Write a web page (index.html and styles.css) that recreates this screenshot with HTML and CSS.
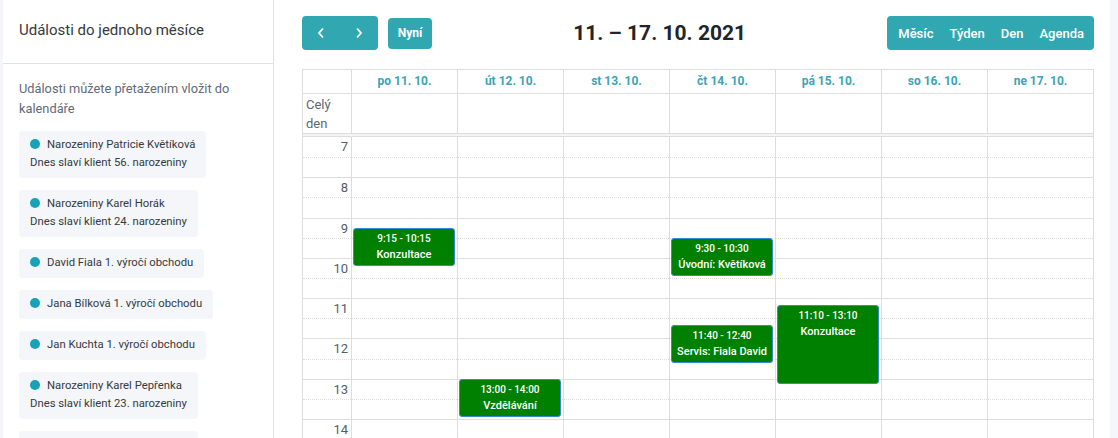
FILE: index.html
```html
<!DOCTYPE html>
<html lang="cs">
<head>
  <meta charset="UTF-8">
  <title>Kalendář</title>
  <link rel="stylesheet" href="styles.css">
</head>
<body>
  <aside class="sidebar">
    <div class="sidebar-head">Události do jednoho měsíce</div>
    <div class="sidebar-body">
      <p class="hint">Události můžete přetažením vložit do kalendáře</p>
      <div class="ext-list">
        <div class="ext-event"><span class="dot"></span>Narozeniny Patricie Květíková<br>Dnes slaví klient 56. narozeniny</div>
        <div class="ext-event"><span class="dot"></span>Narozeniny Karel Horák<br>Dnes slaví klient 24. narozeniny</div>
        <div class="ext-event"><span class="dot"></span>David Fiala 1. výročí obchodu</div>
        <div class="ext-event"><span class="dot"></span>Jana Bílková 1. výročí obchodu</div>
        <div class="ext-event"><span class="dot"></span>Jan Kuchta 1. výročí obchodu</div>
        <div class="ext-event"><span class="dot"></span>Narozeniny Karel Pepřenka<br>Dnes slaví klient 23. narozeniny</div>
        <div class="ext-event"><span class="dot"></span>Narozeniny Petr Novák<br>Dnes slaví klient 41. narozeniny</div>
      </div>
    </div>
  </aside>

  <main class="main">
    <div class="toolbar">
      <div class="tb-left">
        <div class="btn-group">
          <button class="btn btn-arrow" aria-label="předchozí">
            <svg width="8" height="12" viewBox="0 0 8 12"><polyline points="6,1.5 2,6 6,10.5" fill="none" stroke="#fff" stroke-width="1.8"/></svg>
          </button>
          <button class="btn btn-arrow" aria-label="další">
            <svg width="8" height="12" viewBox="0 0 8 12"><polyline points="2,1.5 6,6 2,10.5" fill="none" stroke="#fff" stroke-width="1.8"/></svg>
          </button>
        </div>
        <button class="btn btn-today">Nyní</button>
      </div>
      <h2 class="title">11. – 17. 10. 2021</h2>
      <div class="btn-group views">
        <button class="btn">Měsíc</button>
        <button class="btn">Týden</button>
        <button class="btn">Den</button>
        <button class="btn">Agenda</button>
      </div>
    </div>

    <div class="calendar">
      <div class="cal-row cal-head">
        <div class="cell"></div>
        <div class="cell">po 11. 10.</div>
        <div class="cell">út 12. 10.</div>
        <div class="cell">st 13. 10.</div>
        <div class="cell">čt 14. 10.</div>
        <div class="cell">pá 15. 10.</div>
        <div class="cell">so 16. 10.</div>
        <div class="cell">ne 17. 10.</div>
      </div>
      <div class="cal-row all-day">
        <div class="cell gutter-label">Celý den</div>
        <div class="cell"></div><div class="cell"></div><div class="cell"></div>
        <div class="cell"></div><div class="cell"></div><div class="cell"></div><div class="cell"></div>
      </div>
      <div class="divider"></div>
      <div class="cal-body">
        <div class="slots" id="slots"></div>
        <div class="day-cols" id="dayCols"></div>
      </div>
    </div>
  </main>

  <script>
    const HOUR_H = 40.3;
    const FIRST_HOUR = 7;
    const events = [
      {day: 0, start: 9.25, end: 10.25, time: '9:15 - 10:15', title: 'Konzultace'},
      {day: 1, start: 13, end: 14, time: '13:00 - 14:00', title: 'Vzdělávání'},
      {day: 3, start: 9.5, end: 10.5, time: '9:30 - 10:30', title: 'Úvodní: Květíková'},
      {day: 3, start: 11 + 40/60, end: 12 + 40/60, time: '11:40 - 12:40', title: 'Servis: Fiala David'},
      {day: 4, start: 11 + 10/60, end: 13 + 10/60, time: '11:10 - 13:10', title: 'Konzultace'}
    ];

    const slots = document.getElementById('slots');
    for (let h = FIRST_HOUR; h < 20; h++) {
      slots.innerHTML += `<div class="hour"><div class="half"><span class="hlabel">${h}</span></div><div class="half half-b"></div></div>`;
    }

    const cols = document.getElementById('dayCols');
    for (let d = 0; d < 7; d++) {
      const col = document.createElement('div');
      col.className = 'day-col';
      events.filter(e => e.day === d).forEach(e => {
        const top = (e.start - FIRST_HOUR) * HOUR_H;
        const height = (e.end - e.start) * HOUR_H - 2;
        col.innerHTML += `<div class="event" style="top:${top}px;height:${height}px"><div class="ev-time">${e.time}</div><div class="ev-title">${e.title}</div></div>`;
      });
      cols.appendChild(col);
    }
  </script>
</body>
</html>
```

FILE: styles.css
```css
* { box-sizing: border-box; }
html, body { height: 100%; }
body {
  margin: 0;
  display: flex;
  background-color: #f4f6f9;
  font-family: Roboto, 'Liberation Sans', sans-serif;
  color: #333;
  overflow: hidden;
}

/* sidebar */
.sidebar {
  margin-left: 3px;
  width: 271px;
  flex: none;
  background: #fff;
  border-right: 1px solid #dee2e6;
}
.sidebar-head {
  height: 64px;
  line-height: 60px;
  padding: 0 16px;
  font-size: 15px;
  color: #343a40;
  border-bottom: 1px solid #dee2e6;
}
.sidebar-body { padding: 15px 16px 0; }
.hint {
  margin: 0 0 12px;
  font-size: 12.8px;
  line-height: 20px;
  color: #5f6b78;
}
.ext-list { display: flex; flex-direction: column; align-items: flex-start; gap: 12px; }
.ext-event {
  background: #f4f6f9;
  border-radius: 4px;
  padding: 5px 11px 6px;
  font-size: 11.3px;
  line-height: 18px;
  color: #343a40;
  white-space: nowrap;
}
.dot {
  display: inline-block;
  width: 10px;
  height: 10px;
  border-radius: 50%;
  background: #17a2b8;
  margin-right: 7px;
  vertical-align: -1px;
}

/* main */
.main {
  flex: 1;
  margin-right: 8px;
  background: #fff;
  padding: 16px 16px 0 28px;
  overflow: hidden;
}
.toolbar {
  display: flex;
  justify-content: space-between;
  align-items: center;
  height: 34px;
  margin-bottom: 19px;
}
.tb-left { display: flex; align-items: center; gap: 10px; }
.btn-group { display: flex; border-radius: 4px; overflow: hidden; }
.btn {
  border: none;
  margin: 0;
  background: #31a8b1;
  color: #fff;
  font-family: inherit;
  font-size: 13px;
  font-weight: 500;
  height: 34px;
  padding: 0 8px;
  cursor: pointer;
}
.views .btn:first-child { padding-left: 11px; }
.views .btn:last-child { padding-right: 10px; }
.btn-arrow { width: 38px; padding: 0; display: flex; align-items: center; justify-content: center; }
.btn-today { height: 31px; width: 44px; padding: 0; border-radius: 4px; font-size: 12px; font-weight: 700; }
.title {
  margin: 0;
  font-size: 21px;
  font-weight: 700;
  color: #212529;
}

/* calendar */
.calendar { border: 1px solid #ddd; border-bottom: none; }
.cal-row {
  display: grid;
  grid-template-columns: 48px repeat(7, 1fr);
}
.cal-row .cell + .cell { border-left: 1px solid #ddd; }
.cal-head { height: 24px; border-bottom: 1px solid #ddd; }
.cal-head .cell {
  text-align: center;
  font-size: 12px;
  font-weight: 700;
  line-height: 23px;
  color: #3ba4b6;
}
.all-day { height: 40px; border-bottom: 1px solid #ddd; }
.gutter-label {
  font-size: 13px;
  line-height: 19px;
  padding: 1px 0 0 3px;
  color: #5c6670;
}
.divider { height: 3px; background: #f4f4f4; border-bottom: 1px solid #ddd; }

.cal-body { position: relative; }
.hour {
  height: 40.3px;
  display: flex;
  flex-direction: column;
  border-top: 1px solid #ddd;
}
.hour:first-child { border-top: none; }
.half { flex: 1; }
.half-b { border-top: 1px dotted #ddd; }
.hlabel {
  display: block;
  width: 45px;
  text-align: right;
  font-size: 13px;
  line-height: 16px;
  padding-top: 2px;
  color: #555d66;
}
.day-cols {
  position: absolute;
  top: 0; bottom: 0; left: 48px; right: 0;
  display: grid;
  grid-template-columns: repeat(7, 1fr);
}
.day-col { position: relative; border-left: 1px solid #ddd; }
.event {
  position: absolute;
  left: 1px;
  right: 2px;
  background: #008000;
  border: 1px solid #3788d8;
  border-radius: 3px;
  color: #fff;
  text-align: center;
  padding-top: 2px;
  overflow: hidden;
}
.ev-time { font-size: 10px; line-height: 15px; font-weight: 500; }
.ev-title { font-size: 11px; line-height: 17px; font-weight: 500; }
```
